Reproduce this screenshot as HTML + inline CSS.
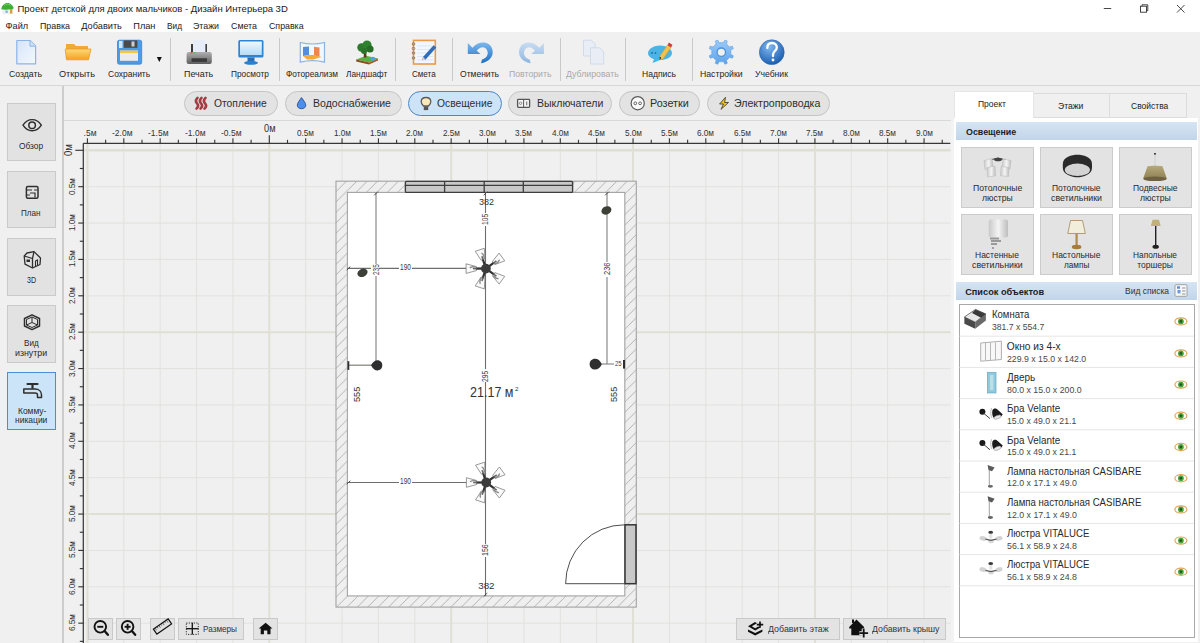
<!DOCTYPE html><html><head><meta charset="utf-8"><style>
*{margin:0;padding:0;box-sizing:border-box}
html,body{width:1200px;height:643px;overflow:hidden;background:#f0f0f0;font-family:"Liberation Sans",sans-serif}
.t{position:absolute;white-space:pre}
.b{position:absolute}
svg{position:absolute;overflow:visible}
</style></head><body>
<div class="b" style="left:0.00px;top:0.00px;width:1200.00px;height:32.00px;background:#fff"></div>
<svg style="left:0;top:0" width="16" height="16" viewBox="0 0 16 16">
<rect x="2.2" y="8.5" width="10" height="5.8" fill="#eef1f4"/>
<rect x="5.5" y="10.5" width="2.2" height="2.4" fill="#7aaee0"/>
<rect x="10" y="9" width="2.4" height="4.6" fill="#d6a03c"/>
<path d="M1.3,9.2 C1.8,5.5 4.5,3.1 7.4,3.1 C10.5,3.1 13.2,5.6 13.7,8.6 C11.5,9.8 4,10 1.3,9.2Z" fill="#3fae35"/>
<path d="M4,5.5 C5.5,4 8.5,3.8 10.5,5.2" fill="none" stroke="#6fd060" stroke-width="1"/>
</svg>
<div class="t" style="left:17.50px;top:4.10px;font-size:9.5px;line-height:10.61px;color:#1a1a1a;font-weight:normal;">Проект детской для двоих мальчиков - Дизайн Интерьера 3D</div>
<svg style="left:1100px;top:0" width="100" height="18" viewBox="1100 0 100 18"><line x1="1103.8" y1="8.5" x2="1111.2" y2="8.5" stroke="#333" stroke-width="0.9"/><rect x="1140.5" y="6.2" width="6" height="6" fill="none" stroke="#333" stroke-width="0.9"/><path d="M1142 6.2 V4.8 H1147.8 V10.7 H1146.5" fill="none" stroke="#333" stroke-width="0.9"/><path d="M1177 5 L1184.5 12.5 M1184.5 5 L1177 12.5" stroke="#333" stroke-width="0.9"/></svg>
<div class="t" style="left:5.60px;top:20.87px;font-size:9.2px;line-height:10.28px;color:#1a1a1a;font-weight:normal;">Файл</div>
<div class="t" style="left:40.00px;top:20.87px;font-size:9.2px;line-height:10.28px;color:#1a1a1a;font-weight:normal;transform:scaleX(0.9653);transform-origin:0 0;">Правка</div>
<div class="t" style="left:81.30px;top:20.87px;font-size:9.2px;line-height:10.28px;color:#1a1a1a;font-weight:normal;">Добавить</div>
<div class="t" style="left:133.30px;top:20.87px;font-size:9.2px;line-height:10.28px;color:#1a1a1a;font-weight:normal;">План</div>
<div class="t" style="left:167.00px;top:20.87px;font-size:9.2px;line-height:10.28px;color:#1a1a1a;font-weight:normal;transform:scaleX(0.9012);transform-origin:0 0;">Вид</div>
<div class="t" style="left:193.30px;top:20.87px;font-size:9.2px;line-height:10.28px;color:#1a1a1a;font-weight:normal;transform:scaleX(0.9582);transform-origin:0 0;">Этажи</div>
<div class="t" style="left:230.70px;top:20.87px;font-size:9.2px;line-height:10.28px;color:#1a1a1a;font-weight:normal;transform:scaleX(0.9627);transform-origin:0 0;">Смета</div>
<div class="t" style="left:268.70px;top:20.87px;font-size:9.2px;line-height:10.28px;color:#1a1a1a;font-weight:normal;transform:scaleX(0.9587);transform-origin:0 0;">Справка</div>
<div class="b" style="left:0.00px;top:32.00px;width:1200.00px;height:53.00px;background:#f0f0f0"></div>
<div class="b" style="left:0.00px;top:85.00px;width:1200.00px;height:1.00px;background:#d7d7d7"></div>
<div class="b" style="left:169.50px;top:38.00px;width:1.00px;height:43.00px;background:#c9c9c9"></div>
<div class="b" style="left:279.30px;top:38.00px;width:1.00px;height:43.00px;background:#c9c9c9"></div>
<div class="b" style="left:395.00px;top:38.00px;width:1.00px;height:43.00px;background:#c9c9c9"></div>
<div class="b" style="left:451.70px;top:38.00px;width:1.00px;height:43.00px;background:#c9c9c9"></div>
<div class="b" style="left:559.50px;top:38.00px;width:1.00px;height:43.00px;background:#c9c9c9"></div>
<div class="b" style="left:625.20px;top:38.00px;width:1.00px;height:43.00px;background:#c9c9c9"></div>
<div class="b" style="left:691.90px;top:38.00px;width:1.00px;height:43.00px;background:#c9c9c9"></div>
<div class="t" style="left:9.00px;top:68.79px;font-size:9.4px;line-height:10.50px;color:#262626;font-weight:normal;transform:scaleX(0.9238);transform-origin:0 0;">Создать</div>
<div class="t" style="left:58.80px;top:68.79px;font-size:9.4px;line-height:10.50px;color:#262626;font-weight:normal;transform:scaleX(0.9752);transform-origin:0 0;">Открыть</div>
<div class="t" style="left:107.70px;top:68.79px;font-size:9.4px;line-height:10.50px;color:#262626;font-weight:normal;transform:scaleX(0.9055);transform-origin:0 0;">Сохранить</div>
<div class="t" style="left:183.80px;top:68.79px;font-size:9.4px;line-height:10.50px;color:#262626;font-weight:normal;transform:scaleX(0.9482);transform-origin:0 0;">Печать</div>
<div class="t" style="left:230.70px;top:68.79px;font-size:9.4px;line-height:10.50px;color:#262626;font-weight:normal;transform:scaleX(0.8852);transform-origin:0 0;">Просмотр</div>
<div class="t" style="left:285.50px;top:68.79px;font-size:9.4px;line-height:10.50px;color:#262626;font-weight:normal;transform:scaleX(0.8863);transform-origin:0 0;">Фотореализм</div>
<div class="t" style="left:346.00px;top:68.79px;font-size:9.4px;line-height:10.50px;color:#262626;font-weight:normal;transform:scaleX(0.8848);transform-origin:0 0;">Ландшафт</div>
<div class="t" style="left:411.70px;top:68.79px;font-size:9.4px;line-height:10.50px;color:#262626;font-weight:normal;transform:scaleX(0.8589);transform-origin:0 0;">Смета</div>
<div class="t" style="left:460.40px;top:68.79px;font-size:9.4px;line-height:10.50px;color:#262626;font-weight:normal;transform:scaleX(0.9103);transform-origin:0 0;">Отменить</div>
<div class="t" style="left:509.20px;top:68.79px;font-size:9.4px;line-height:10.50px;color:#a9a9a9;font-weight:normal;transform:scaleX(0.9285);transform-origin:0 0;">Повторить</div>
<div class="t" style="left:565.70px;top:68.79px;font-size:9.4px;line-height:10.50px;color:#a9a9a9;font-weight:normal;transform:scaleX(0.9339);transform-origin:0 0;">Дублировать</div>
<div class="t" style="left:641.70px;top:68.79px;font-size:9.4px;line-height:10.50px;color:#262626;font-weight:normal;transform:scaleX(0.9108);transform-origin:0 0;">Надпись</div>
<div class="t" style="left:699.50px;top:68.79px;font-size:9.4px;line-height:10.50px;color:#262626;font-weight:normal;transform:scaleX(0.9264);transform-origin:0 0;">Настройки</div>
<div class="t" style="left:755.00px;top:68.79px;font-size:9.4px;line-height:10.50px;color:#262626;font-weight:normal;transform:scaleX(0.9185);transform-origin:0 0;">Учебник</div>
<svg style="left:0;top:32px" width="800" height="53" viewBox="0 32 800 53"><defs><linearGradient id="gdoc" x1="0" y1="0" x2="1" y2="1"><stop offset="0" stop-color="#d6e4fa"/><stop offset="1" stop-color="#f4f8fe"/></linearGradient><linearGradient id="gfold" x1="0" y1="0" x2="0" y2="1"><stop offset="0" stop-color="#ffd97a"/><stop offset="1" stop-color="#f4a21e"/></linearGradient><linearGradient id="gscr" x1="0" y1="0" x2="0" y2="1"><stop offset="0" stop-color="#eef7fd"/><stop offset="1" stop-color="#b9dcf4"/></linearGradient><linearGradient id="gprn" x1="0" y1="0" x2="0" y2="1"><stop offset="0" stop-color="#b0b0b0"/><stop offset="1" stop-color="#5e5e5e"/></linearGradient><linearGradient id="gundo" x1="0" y1="0" x2="0" y2="1"><stop offset="0" stop-color="#7ab8ee"/><stop offset="1" stop-color="#1f6fc0"/></linearGradient><linearGradient id="gredo" x1="0" y1="0" x2="0" y2="1"><stop offset="0" stop-color="#c8ddf2"/><stop offset="1" stop-color="#8fb6de"/></linearGradient><radialGradient id="ghelp" cx="0.4" cy="0.3" r="0.7"><stop offset="0" stop-color="#7db7f0"/><stop offset="1" stop-color="#1d5fb0"/></radialGradient><linearGradient id="ggear" x1="0" y1="0" x2="0" y2="1"><stop offset="0" stop-color="#9cccf8"/><stop offset="1" stop-color="#5da2ea"/></linearGradient></defs><path d="M16.8,40.5 H30 L35.6,46.2 V63.8 H16.8 Z" fill="url(#gdoc)" stroke="#8bb4ea" stroke-width="1.2" stroke-linejoin="round"/><path d="M30,40.5 V46.2 H35.6" fill="#cfe0f8" stroke="#8bb4ea" stroke-width="1"/><path d="M66,44 H74 L76,46 H88 V58.5 H66 Z" fill="#f2a93a"/><path d="M65.2,49 H91 L88.5,59.8 H66.5 Z" fill="url(#gfold)" stroke="#eb9a22" stroke-width="0.8"/><rect x="117.5" y="40.2" width="24.2" height="24" rx="1.8" fill="#4c9be6" stroke="#3a85d4" stroke-width="0.8"/><rect x="119" y="41" width="3.5" height="7" fill="#cfe6fb"/><rect x="123.8" y="40.4" width="13.6" height="7.4" fill="#4a4a4a"/><rect x="131.5" y="41.5" width="3" height="5" fill="#cfcfcf"/><rect x="120" y="50.6" width="18" height="10.2" fill="#ebebeb"/><rect x="120" y="50.6" width="18" height="2.4" fill="#f3c73e"/><path d="M156.8,57 H161.8 L159.3,62 Z" fill="#111"/><rect x="191" y="44" width="16" height="9" fill="#3c3c3c"/><rect x="193" y="40" width="12.4" height="12.5" fill="#e6edf9"/><rect x="186.6" y="52" width="25.2" height="11.9" rx="2" fill="url(#gprn)"/><rect x="190.5" y="52.3" width="2" height="1.2" fill="#e04040"/><rect x="193.5" y="52.3" width="2.2" height="1.2" fill="#40c040"/><rect x="191.5" y="58.3" width="15.5" height="3.6" fill="#3a3a3a"/><rect x="238.3" y="40" width="25.2" height="17.6" rx="1.5" fill="#2f84d2"/><rect x="240" y="41.5" width="21.8" height="13.5" fill="url(#gscr)"/><rect x="247.5" y="57.5" width="7" height="3.5" fill="#2a6fb5"/><ellipse cx="251" cy="62.8" rx="7" ry="2" fill="#2f7ecb"/><path d="M300.3,42.5 Q312.5,45.5 324.5,42.5 V62.2 Q312.5,59.2 300.3,62.2 Z" fill="#f2f7fd" stroke="#8fb3dc" stroke-width="1.2"/><path d="M303,47 L309,46.4 V55 L303,56 Z" fill="#4f8fdc"/><path d="M314,46.8 L319.5,47.5 V56.5 L314,55.5 Z" fill="#ef8650"/><path d="M303,56 L309,55 H314 L321.5,57 L313,59.5 H307 Z" fill="#f2a93a"/><path d="M356.2,59.6 L366,55.8 L378,58.6 L369,62.4 Z" fill="#58b040"/><path d="M356.2,59.6 L369,62.4 V64.5 L356.2,61.6 Z" fill="#8a4a1e"/><path d="M369,62.4 L378,58.6 V60.6 L369,64.5 Z" fill="#a55a28"/><rect x="363.8" y="50.5" width="2.6" height="7" fill="#5a3a1a"/><circle cx="361.5" cy="47.5" r="4.2" fill="#2c7a2c"/><circle cx="367" cy="45" r="4.6" fill="#2e822e"/><circle cx="370" cy="49" r="3.6" fill="#256c25"/><circle cx="364" cy="51" r="3" fill="#2a742a"/><ellipse cx="372.8" cy="58.8" rx="2.4" ry="2" fill="#45a8e0"/><rect x="413.5" y="40.4" width="21.8" height="23.6" fill="#f3f7fd" stroke="#ea9a48" stroke-width="1.6"/><line x1="417" y1="46" x2="433" y2="46" stroke="#cfdbea" stroke-width="0.6"/><line x1="417" y1="49.5" x2="433" y2="49.5" stroke="#cfdbea" stroke-width="0.6"/><line x1="417" y1="53" x2="433" y2="53" stroke="#cfdbea" stroke-width="0.6"/><line x1="417" y1="56.5" x2="433" y2="56.5" stroke="#cfdbea" stroke-width="0.6"/><line x1="417" y1="60" x2="433" y2="60" stroke="#cfdbea" stroke-width="0.6"/><circle cx="413.5" cy="44" r="1.3" fill="none" stroke="#8a6a4a" stroke-width="0.8"/><circle cx="413.5" cy="48.5" r="1.3" fill="none" stroke="#8a6a4a" stroke-width="0.8"/><circle cx="413.5" cy="53" r="1.3" fill="none" stroke="#8a6a4a" stroke-width="0.8"/><circle cx="413.5" cy="58" r="1.3" fill="none" stroke="#8a6a4a" stroke-width="0.8"/><path d="M423,57 L433.6,45.2 L436.3,47.6 L425.6,59.4 L422.3,60.2 Z" fill="#2f6dbb"/><path d="M422.3,60.2 L423,57 L425.6,59.4 Z" fill="#e8d0b0"/><path d="M472.5,47.8 C478,41 490,40 492.5,50 C494,57 488,62.5 481,63.3 L482,59.5 C486,58.5 488.5,55 487.5,51.5 C486,46 480,46 476.8,50.8 L480.5,54 H467.8 V43 Z" fill="url(#gundo)"/><path d="M539.2,47.8 C533.7,41 521.7,40 519.2,50 C517.7,57 523.7,62.5 530.7,63.3 L529.7,59.5 C525.7,58.5 523.2,55 524.2,51.5 C525.7,46 531.7,46 534.9,50.8 L531.2,54 H543.9 V43 Z" fill="url(#gredo)"/><path d="M583.5,40.2 H591.5 L595,43.8 V56 H583.5 Z" fill="#e8edf6" stroke="#cdd8e8" stroke-width="0.9"/><path d="M590.5,47.8 H599.5 L603.7,51.8 V64 H590.5 Z" fill="#e8edf6" stroke="#cdd8e8" stroke-width="0.9"/><path d="M648,53.5 C648,48.5 654,45.5 660,45.5 C666,45.5 672,48.5 672,53 C672,57.5 666,60 660,60 L652.5,63 L654,59.3 C650.5,58 648,56 648,53.5Z" fill="#4cb4e4"/><circle cx="652" cy="53" r="0.9" fill="#2a6aa8"/><circle cx="655.5" cy="53" r="0.9" fill="#2a6aa8"/><path d="M659.5,56.5 L667.5,45 L671,47.5 L663,59 L659.8,60 Z" fill="#f2c24a" stroke="#c99a2a" stroke-width="0.5"/><path d="M667.5,45 L669,42.5 L672.5,45 L671,47.5 Z" fill="#d03a3a"/><path d="M659.8,60 L659.5,56.5 L661.2,57.8 Z" fill="#222"/><path d="M730.90,52.20 L730.67,54.29 L733.38,55.79 L732.38,58.20 L729.41,57.34 L728.09,58.99 L726.44,60.31 L727.30,63.28 L724.89,64.28 L723.39,61.57 L721.30,61.80 L719.21,61.57 L717.71,64.28 L715.30,63.28 L716.16,60.31 L714.51,58.99 L713.19,57.34 L710.22,58.20 L709.22,55.79 L711.93,54.29 L711.70,52.20 L711.93,50.11 L709.22,48.61 L710.22,46.20 L713.19,47.06 L714.51,45.41 L716.16,44.09 L715.30,41.12 L717.71,40.12 L719.21,42.83 L721.30,42.60 L723.39,42.83 L724.89,40.12 L727.30,41.12 L726.44,44.09 L728.09,45.41 L729.41,47.06 L732.38,46.20 L733.38,48.61 L730.67,50.11Z" fill="url(#ggear)" stroke="#5c9fe0" stroke-width="0.6"/><circle cx="721.3" cy="52.2" r="4.2" fill="#f0f0f0" stroke="#4f92d8" stroke-width="1.3"/><circle cx="771.8" cy="52.2" r="12.4" fill="url(#ghelp)" stroke="#2a62a8" stroke-width="0.6"/><path d="M767.3,48 C767.3,44.6 769.5,43 772,43 C775,43 776.8,45 776.8,47.5 C776.8,50.5 773.5,51 773,54.5 V56" fill="none" stroke="#fff" stroke-width="2.3" stroke-linecap="round"/><circle cx="773" cy="60" r="1.4" fill="#fff"/></svg>
<div class="b" style="left:62.20px;top:86.00px;width:1.60px;height:557.00px;background:#cdcdcd"></div>
<div class="b" style="left:7.20px;top:103.20px;width:48.40px;height:58.00px;background:#e2e2e2;border:1px solid #cacaca"></div>
<div class="b" style="left:7.20px;top:170.50px;width:48.40px;height:57.70px;background:#e2e2e2;border:1px solid #cacaca"></div>
<div class="b" style="left:7.20px;top:238.00px;width:48.40px;height:57.50px;background:#e2e2e2;border:1px solid #cacaca"></div>
<div class="b" style="left:7.20px;top:305.00px;width:48.40px;height:57.50px;background:#e2e2e2;border:1px solid #cacaca"></div>
<div class="b" style="left:7.20px;top:372.00px;width:48.40px;height:57.50px;background:#cce4f7;border:1.3px solid #4a8fd6"></div>
<svg style="left:0;top:0" width="64" height="643" viewBox="0 0 64 643"><path d="M23,125.2 C26,120.5 29,119.6 32.1,119.6 C35.2,119.6 38.4,120.5 41.3,125.2 C38.4,129.9 35.2,130.8 32.1,130.8 C29,130.8 26,129.9 23,125.2Z" fill="none" stroke="#2e2e2e" stroke-width="1.4"/><circle cx="32.1" cy="125.2" r="3.3" fill="none" stroke="#2e2e2e" stroke-width="1.5"/><rect x="26.4" y="186.4" width="11.6" height="11.8" rx="1.5" fill="none" stroke="#2e2e2e" stroke-width="1.5"/><path d="M27,190 H32 M34,190 H37.4 M30,193 H35 V197.5 M27,195 H30" fill="none" stroke="#2e2e2e" stroke-width="1.2"/><path d="M24.2,256 L27,253 L34,251.6 L40.5,258 L40,264.5 L32.5,268 L25,264.2 Z" fill="none" stroke="#2e2e2e" stroke-width="1.3" stroke-linejoin="round"/><path d="M24.2,256 L32.5,258.5 L34,251.6 M32.5,258.5 V268" fill="none" stroke="#2e2e2e" stroke-width="1.3"/><rect x="26.5" y="259.5" width="3.5" height="2.5" fill="#2e2e2e"/><path d="M35.5,267 V261 L37.5,260 V266" fill="none" stroke="#2e2e2e" stroke-width="1.1"/><path d="M32,314.8 L39.5,318.5 V326 L32,329.6 L24.5,326 V318.5 Z" fill="none" stroke="#2e2e2e" stroke-width="1.5" stroke-linejoin="round"/><path d="M26.5,319.5 L32,317 L37.5,319.5 V325 L32,327.5 L26.5,325 Z" fill="none" stroke="#2e2e2e" stroke-width="1"/><path d="M26.5,325 L32,322.5 L37.5,325 M32,317 V322.5" fill="none" stroke="#2e2e2e" stroke-width="1"/><path d="M27.5,384 H37.5 M32.5,384 V388" fill="none" stroke="#2e2e2e" stroke-width="2.2" stroke-linecap="round"/><path d="M23.8,389 H35 C39,389 41.5,391.5 41.5,395 V397.5 H37.5 V395 C37.5,393.8 36.5,393 35,393 H23.8 Z" fill="none" stroke="#2e2e2e" stroke-width="1.5" stroke-linejoin="round"/></svg>
<div class="t" style="left:19.20px;top:140.67px;font-size:9.2px;line-height:10.28px;color:#2a2a2a;font-weight:normal;transform:scaleX(0.9107);transform-origin:0 0;">Обзор</div>
<div class="t" style="left:21.40px;top:207.87px;font-size:9.2px;line-height:10.28px;color:#2a2a2a;font-weight:normal;transform:scaleX(0.8792);transform-origin:0 0;">План</div>
<div class="t" style="left:26.70px;top:274.87px;font-size:9.2px;line-height:10.28px;color:#2a2a2a;font-weight:normal;transform:scaleX(0.7737);transform-origin:0 0;">3D</div>
<div class="t" style="left:23.70px;top:337.67px;font-size:9.2px;line-height:10.28px;color:#2a2a2a;font-weight:normal;transform:scaleX(0.8832);transform-origin:0 0;">Вид</div>
<div class="t" style="left:15.10px;top:347.77px;font-size:9.2px;line-height:10.28px;color:#2a2a2a;font-weight:normal;transform:scaleX(0.9610);transform-origin:0 0;">изнутри</div>
<div class="t" style="left:18.10px;top:405.67px;font-size:9.2px;line-height:10.28px;color:#2a2a2a;font-weight:normal;transform:scaleX(0.9193);transform-origin:0 0;">Комму-</div>
<div class="t" style="left:15.10px;top:415.27px;font-size:9.2px;line-height:10.28px;color:#2a2a2a;font-weight:normal;transform:scaleX(0.9228);transform-origin:0 0;">никации</div>
<div class="b" style="left:64.00px;top:120.00px;width:886.80px;height:1.00px;background:#d8d8d8"></div>
<div class="b" style="left:184.00px;top:91.00px;width:94.00px;height:25.00px;background:#e3e3e3;border:1px solid #c4c4c4;border-radius:13px"></div>
<div class="t" style="left:214.00px;top:98.28px;font-size:10.3px;line-height:11.51px;color:#2e2e2e;font-weight:normal;">Отопление</div>
<div class="b" style="left:284.60px;top:91.00px;width:117.00px;height:25.00px;background:#e3e3e3;border:1px solid #c4c4c4;border-radius:13px"></div>
<div class="t" style="left:313.40px;top:98.28px;font-size:10.3px;line-height:11.51px;color:#2e2e2e;font-weight:normal;transform:scaleX(1.0229);transform-origin:0 0;">Водоснабжение</div>
<div class="b" style="left:408.00px;top:91.00px;width:93.60px;height:25.00px;background:#cde4f8;border:1.3px solid #4c86c4;border-radius:13px"></div>
<div class="t" style="left:437.00px;top:98.28px;font-size:10.3px;line-height:11.51px;color:#2e2e2e;font-weight:normal;">Освещение</div>
<div class="b" style="left:508.00px;top:91.00px;width:104.00px;height:25.00px;background:#e3e3e3;border:1px solid #c4c4c4;border-radius:13px"></div>
<div class="t" style="left:536.60px;top:98.28px;font-size:10.3px;line-height:11.51px;color:#2e2e2e;font-weight:normal;transform:scaleX(1.0211);transform-origin:0 0;">Выключатели</div>
<div class="b" style="left:619.00px;top:91.00px;width:81.00px;height:25.00px;background:#e3e3e3;border:1px solid #c4c4c4;border-radius:13px"></div>
<div class="t" style="left:649.60px;top:98.28px;font-size:10.3px;line-height:11.51px;color:#2e2e2e;font-weight:normal;transform:scaleX(1.0486);transform-origin:0 0;">Розетки</div>
<div class="b" style="left:707.00px;top:91.00px;width:122.60px;height:25.00px;background:#e3e3e3;border:1px solid #c4c4c4;border-radius:13px"></div>
<div class="t" style="left:734.00px;top:98.28px;font-size:10.3px;line-height:11.51px;color:#2e2e2e;font-weight:normal;transform:scaleX(1.0291);transform-origin:0 0;">Электропроводка</div>
<svg style="left:180px;top:88px" width="560" height="30" viewBox="180 88 560 30"><path d="M197.5,97.8 C195.3,100 195.3,101.5 197.0,103.3 C198.7,105 198.7,106.5 196.5,108.7" fill="none" stroke="#a53a42" stroke-width="2.6" stroke-linecap="round"/><path d="M201.5,97.8 C199.3,100 199.3,101.5 201.0,103.3 C202.7,105 202.7,106.5 200.5,108.7" fill="none" stroke="#a53a42" stroke-width="2.6" stroke-linecap="round"/><path d="M205.5,97.8 C203.3,100 203.3,101.5 205.0,103.3 C206.7,105 206.7,106.5 204.5,108.7" fill="none" stroke="#a53a42" stroke-width="2.6" stroke-linecap="round"/><path d="M301.5,97.6 C303.5,100.5 305.8,103 305.8,105.2 C305.8,107.4 304,108.7 301.5,108.7 C299,108.7 297.3,107.4 297.3,105.2 C297.3,103 299.5,100.5 301.5,97.6Z" fill="#4a8ef0" stroke="#2c4f8e" stroke-width="0.9"/><path d="M423.5,106 C422,104.5 421.2,103 421.2,101.8 C421.2,99.2 423.2,97.5 426,97.5 C428.8,97.5 430.8,99.2 430.8,101.8 C430.8,103 430,104.5 428.5,106 Z" fill="#fde9b8" stroke="#5a5a5a" stroke-width="1.3"/><rect x="423.8" y="106.5" width="4.4" height="3.6" fill="#555"/><rect x="517.6" y="99.3" width="12" height="8" rx="0.8" fill="#f4f4f4" stroke="#555" stroke-width="1.3"/><line x1="523.6" y1="99.3" x2="523.6" y2="107.3" stroke="#555" stroke-width="1"/><circle cx="520.6" cy="103.3" r="1.2" fill="none" stroke="#666" stroke-width="0.7"/><rect x="526" y="101.5" width="1.3" height="3.8" fill="#888"/><circle cx="637.7" cy="103.2" r="6.6" fill="#fafafa" stroke="#5a5a5a" stroke-width="1.2"/><circle cx="635.3" cy="103.3" r="1.4" fill="none" stroke="#555" stroke-width="0.9"/><circle cx="640.1" cy="103.3" r="1.4" fill="none" stroke="#555" stroke-width="0.9"/><path d="M725.5,97.3 L719.6,104 H723.5 L721,109.3 L728.5,102.5 H724.6 Z" fill="#f2c41e" stroke="#4a4428" stroke-width="0.9" stroke-linejoin="round"/></svg>
<svg style="left:0;top:0" width="1200" height="643" viewBox="0 0 1200 643"><line x1="87.43" y1="144" x2="87.43" y2="643" stroke="#dfdfd4" stroke-width="2"/><line x1="123.80" y1="144" x2="123.80" y2="643" stroke="#e1e1de" stroke-width="1"/><line x1="160.18" y1="144" x2="160.18" y2="643" stroke="#e1e1de" stroke-width="1"/><line x1="196.55" y1="144" x2="196.55" y2="643" stroke="#e1e1de" stroke-width="1"/><line x1="232.93" y1="144" x2="232.93" y2="643" stroke="#e1e1de" stroke-width="1"/><line x1="269.30" y1="144" x2="269.30" y2="643" stroke="#dfdfd4" stroke-width="2"/><line x1="305.68" y1="144" x2="305.68" y2="643" stroke="#e1e1de" stroke-width="1"/><line x1="342.05" y1="144" x2="342.05" y2="643" stroke="#e1e1de" stroke-width="1"/><line x1="378.43" y1="144" x2="378.43" y2="643" stroke="#e1e1de" stroke-width="1"/><line x1="414.80" y1="144" x2="414.80" y2="643" stroke="#e1e1de" stroke-width="1"/><line x1="451.18" y1="144" x2="451.18" y2="643" stroke="#dfdfd4" stroke-width="2"/><line x1="487.55" y1="144" x2="487.55" y2="643" stroke="#e1e1de" stroke-width="1"/><line x1="523.92" y1="144" x2="523.92" y2="643" stroke="#e1e1de" stroke-width="1"/><line x1="560.30" y1="144" x2="560.30" y2="643" stroke="#e1e1de" stroke-width="1"/><line x1="596.67" y1="144" x2="596.67" y2="643" stroke="#e1e1de" stroke-width="1"/><line x1="633.05" y1="144" x2="633.05" y2="643" stroke="#dfdfd4" stroke-width="2"/><line x1="669.42" y1="144" x2="669.42" y2="643" stroke="#e1e1de" stroke-width="1"/><line x1="705.80" y1="144" x2="705.80" y2="643" stroke="#e1e1de" stroke-width="1"/><line x1="742.17" y1="144" x2="742.17" y2="643" stroke="#e1e1de" stroke-width="1"/><line x1="778.55" y1="144" x2="778.55" y2="643" stroke="#e1e1de" stroke-width="1"/><line x1="814.92" y1="144" x2="814.92" y2="643" stroke="#dfdfd4" stroke-width="2"/><line x1="851.30" y1="144" x2="851.30" y2="643" stroke="#e1e1de" stroke-width="1"/><line x1="887.67" y1="144" x2="887.67" y2="643" stroke="#e1e1de" stroke-width="1"/><line x1="924.05" y1="144" x2="924.05" y2="643" stroke="#e1e1de" stroke-width="1"/><line x1="84" y1="150.30" x2="950.5" y2="150.30" stroke="#dfdfd4" stroke-width="2.4"/><line x1="84" y1="186.68" x2="950.5" y2="186.68" stroke="#e1e1de" stroke-width="1"/><line x1="84" y1="223.05" x2="950.5" y2="223.05" stroke="#e1e1de" stroke-width="1"/><line x1="84" y1="259.43" x2="950.5" y2="259.43" stroke="#e1e1de" stroke-width="1"/><line x1="84" y1="295.80" x2="950.5" y2="295.80" stroke="#e1e1de" stroke-width="1"/><line x1="84" y1="332.18" x2="950.5" y2="332.18" stroke="#dfdfd4" stroke-width="2"/><line x1="84" y1="368.55" x2="950.5" y2="368.55" stroke="#e1e1de" stroke-width="1"/><line x1="84" y1="404.93" x2="950.5" y2="404.93" stroke="#e1e1de" stroke-width="1"/><line x1="84" y1="441.30" x2="950.5" y2="441.30" stroke="#e1e1de" stroke-width="1"/><line x1="84" y1="477.68" x2="950.5" y2="477.68" stroke="#e1e1de" stroke-width="1"/><line x1="84" y1="514.05" x2="950.5" y2="514.05" stroke="#dfdfd4" stroke-width="2"/><line x1="84" y1="550.42" x2="950.5" y2="550.42" stroke="#e1e1de" stroke-width="1"/><line x1="84" y1="586.80" x2="950.5" y2="586.80" stroke="#e1e1de" stroke-width="1"/><line x1="84" y1="623.17" x2="950.5" y2="623.17" stroke="#e1e1de" stroke-width="1"/><line x1="83.3" y1="143.3" x2="950.3" y2="143.3" stroke="#383838" stroke-width="1.25"/><line x1="83.3" y1="143.3" x2="83.3" y2="643" stroke="#383838" stroke-width="1.25"/><line x1="87.43" y1="138.30" x2="87.43" y2="143.3" stroke="#383838" stroke-width="1.15"/><line x1="105.61" y1="139.80" x2="105.61" y2="143.3" stroke="#383838" stroke-width="1.15"/><line x1="123.80" y1="138.30" x2="123.80" y2="143.3" stroke="#383838" stroke-width="1.15"/><line x1="141.99" y1="139.80" x2="141.99" y2="143.3" stroke="#383838" stroke-width="1.15"/><line x1="160.18" y1="138.30" x2="160.18" y2="143.3" stroke="#383838" stroke-width="1.15"/><line x1="178.36" y1="139.80" x2="178.36" y2="143.3" stroke="#383838" stroke-width="1.15"/><line x1="196.55" y1="138.30" x2="196.55" y2="143.3" stroke="#383838" stroke-width="1.15"/><line x1="214.74" y1="139.80" x2="214.74" y2="143.3" stroke="#383838" stroke-width="1.15"/><line x1="232.93" y1="138.30" x2="232.93" y2="143.3" stroke="#383838" stroke-width="1.15"/><line x1="251.11" y1="139.80" x2="251.11" y2="143.3" stroke="#383838" stroke-width="1.15"/><line x1="269.30" y1="135.30" x2="269.30" y2="143.3" stroke="#383838" stroke-width="1.15"/><line x1="287.49" y1="139.80" x2="287.49" y2="143.3" stroke="#383838" stroke-width="1.15"/><line x1="305.68" y1="138.30" x2="305.68" y2="143.3" stroke="#383838" stroke-width="1.15"/><line x1="323.86" y1="139.80" x2="323.86" y2="143.3" stroke="#383838" stroke-width="1.15"/><line x1="342.05" y1="138.30" x2="342.05" y2="143.3" stroke="#383838" stroke-width="1.15"/><line x1="360.24" y1="139.80" x2="360.24" y2="143.3" stroke="#383838" stroke-width="1.15"/><line x1="378.43" y1="138.30" x2="378.43" y2="143.3" stroke="#383838" stroke-width="1.15"/><line x1="396.61" y1="139.80" x2="396.61" y2="143.3" stroke="#383838" stroke-width="1.15"/><line x1="414.80" y1="138.30" x2="414.80" y2="143.3" stroke="#383838" stroke-width="1.15"/><line x1="432.99" y1="139.80" x2="432.99" y2="143.3" stroke="#383838" stroke-width="1.15"/><line x1="451.18" y1="138.30" x2="451.18" y2="143.3" stroke="#383838" stroke-width="1.15"/><line x1="469.36" y1="139.80" x2="469.36" y2="143.3" stroke="#383838" stroke-width="1.15"/><line x1="487.55" y1="138.30" x2="487.55" y2="143.3" stroke="#383838" stroke-width="1.15"/><line x1="505.74" y1="139.80" x2="505.74" y2="143.3" stroke="#383838" stroke-width="1.15"/><line x1="523.92" y1="138.30" x2="523.92" y2="143.3" stroke="#383838" stroke-width="1.15"/><line x1="542.11" y1="139.80" x2="542.11" y2="143.3" stroke="#383838" stroke-width="1.15"/><line x1="560.30" y1="138.30" x2="560.30" y2="143.3" stroke="#383838" stroke-width="1.15"/><line x1="578.49" y1="139.80" x2="578.49" y2="143.3" stroke="#383838" stroke-width="1.15"/><line x1="596.67" y1="138.30" x2="596.67" y2="143.3" stroke="#383838" stroke-width="1.15"/><line x1="614.86" y1="139.80" x2="614.86" y2="143.3" stroke="#383838" stroke-width="1.15"/><line x1="633.05" y1="138.30" x2="633.05" y2="143.3" stroke="#383838" stroke-width="1.15"/><line x1="651.24" y1="139.80" x2="651.24" y2="143.3" stroke="#383838" stroke-width="1.15"/><line x1="669.42" y1="138.30" x2="669.42" y2="143.3" stroke="#383838" stroke-width="1.15"/><line x1="687.61" y1="139.80" x2="687.61" y2="143.3" stroke="#383838" stroke-width="1.15"/><line x1="705.80" y1="138.30" x2="705.80" y2="143.3" stroke="#383838" stroke-width="1.15"/><line x1="723.99" y1="139.80" x2="723.99" y2="143.3" stroke="#383838" stroke-width="1.15"/><line x1="742.17" y1="138.30" x2="742.17" y2="143.3" stroke="#383838" stroke-width="1.15"/><line x1="760.36" y1="139.80" x2="760.36" y2="143.3" stroke="#383838" stroke-width="1.15"/><line x1="778.55" y1="138.30" x2="778.55" y2="143.3" stroke="#383838" stroke-width="1.15"/><line x1="796.74" y1="139.80" x2="796.74" y2="143.3" stroke="#383838" stroke-width="1.15"/><line x1="814.92" y1="138.30" x2="814.92" y2="143.3" stroke="#383838" stroke-width="1.15"/><line x1="833.11" y1="139.80" x2="833.11" y2="143.3" stroke="#383838" stroke-width="1.15"/><line x1="851.30" y1="138.30" x2="851.30" y2="143.3" stroke="#383838" stroke-width="1.15"/><line x1="869.49" y1="139.80" x2="869.49" y2="143.3" stroke="#383838" stroke-width="1.15"/><line x1="887.67" y1="138.30" x2="887.67" y2="143.3" stroke="#383838" stroke-width="1.15"/><line x1="905.86" y1="139.80" x2="905.86" y2="143.3" stroke="#383838" stroke-width="1.15"/><line x1="924.05" y1="138.30" x2="924.05" y2="143.3" stroke="#383838" stroke-width="1.15"/><line x1="942.24" y1="139.80" x2="942.24" y2="143.3" stroke="#383838" stroke-width="1.15"/><line x1="75.30" y1="150.30" x2="83.3" y2="150.30" stroke="#383838" stroke-width="1.15"/><line x1="79.80" y1="168.49" x2="83.3" y2="168.49" stroke="#383838" stroke-width="1.15"/><line x1="78.30" y1="186.68" x2="83.3" y2="186.68" stroke="#383838" stroke-width="1.15"/><line x1="79.80" y1="204.86" x2="83.3" y2="204.86" stroke="#383838" stroke-width="1.15"/><line x1="78.30" y1="223.05" x2="83.3" y2="223.05" stroke="#383838" stroke-width="1.15"/><line x1="79.80" y1="241.24" x2="83.3" y2="241.24" stroke="#383838" stroke-width="1.15"/><line x1="78.30" y1="259.43" x2="83.3" y2="259.43" stroke="#383838" stroke-width="1.15"/><line x1="79.80" y1="277.61" x2="83.3" y2="277.61" stroke="#383838" stroke-width="1.15"/><line x1="78.30" y1="295.80" x2="83.3" y2="295.80" stroke="#383838" stroke-width="1.15"/><line x1="79.80" y1="313.99" x2="83.3" y2="313.99" stroke="#383838" stroke-width="1.15"/><line x1="78.30" y1="332.18" x2="83.3" y2="332.18" stroke="#383838" stroke-width="1.15"/><line x1="79.80" y1="350.36" x2="83.3" y2="350.36" stroke="#383838" stroke-width="1.15"/><line x1="78.30" y1="368.55" x2="83.3" y2="368.55" stroke="#383838" stroke-width="1.15"/><line x1="79.80" y1="386.74" x2="83.3" y2="386.74" stroke="#383838" stroke-width="1.15"/><line x1="78.30" y1="404.93" x2="83.3" y2="404.93" stroke="#383838" stroke-width="1.15"/><line x1="79.80" y1="423.11" x2="83.3" y2="423.11" stroke="#383838" stroke-width="1.15"/><line x1="78.30" y1="441.30" x2="83.3" y2="441.30" stroke="#383838" stroke-width="1.15"/><line x1="79.80" y1="459.49" x2="83.3" y2="459.49" stroke="#383838" stroke-width="1.15"/><line x1="78.30" y1="477.68" x2="83.3" y2="477.68" stroke="#383838" stroke-width="1.15"/><line x1="79.80" y1="495.86" x2="83.3" y2="495.86" stroke="#383838" stroke-width="1.15"/><line x1="78.30" y1="514.05" x2="83.3" y2="514.05" stroke="#383838" stroke-width="1.15"/><line x1="79.80" y1="532.24" x2="83.3" y2="532.24" stroke="#383838" stroke-width="1.15"/><line x1="78.30" y1="550.42" x2="83.3" y2="550.42" stroke="#383838" stroke-width="1.15"/><line x1="79.80" y1="568.61" x2="83.3" y2="568.61" stroke="#383838" stroke-width="1.15"/><line x1="78.30" y1="586.80" x2="83.3" y2="586.80" stroke="#383838" stroke-width="1.15"/><line x1="79.80" y1="604.99" x2="83.3" y2="604.99" stroke="#383838" stroke-width="1.15"/><line x1="78.30" y1="623.17" x2="83.3" y2="623.17" stroke="#383838" stroke-width="1.15"/><line x1="79.80" y1="641.36" x2="83.3" y2="641.36" stroke="#383838" stroke-width="1.15"/></svg>
<div class="b" style="left:84px;top:120px;width:20px;height:20px;overflow:hidden"><div class="b" style="left:-84px;top:-120px;width:200px;height:200px"><div class="t" style="left:75.68px;top:128.52px;font-size:8.6px;line-height:9.61px;color:#333;font-weight:normal;transform:scaleX(0.9888);transform-origin:0 0;">-2.5м</div></div></div>
<div class="t" style="left:112.05px;top:128.52px;font-size:8.6px;line-height:9.61px;color:#333;font-weight:normal;transform:scaleX(0.9888);transform-origin:0 0;">-2.0м</div>
<div class="t" style="left:148.43px;top:128.52px;font-size:8.6px;line-height:9.61px;color:#333;font-weight:normal;transform:scaleX(0.9888);transform-origin:0 0;">-1.5м</div>
<div class="t" style="left:184.80px;top:128.52px;font-size:8.6px;line-height:9.61px;color:#333;font-weight:normal;transform:scaleX(0.9888);transform-origin:0 0;">-1.0м</div>
<div class="t" style="left:221.18px;top:128.52px;font-size:8.6px;line-height:9.61px;color:#333;font-weight:normal;transform:scaleX(0.9888);transform-origin:0 0;">-0.5м</div>
<div class="t" style="left:263.70px;top:123.47px;font-size:10.2px;line-height:11.39px;color:#333;font-weight:normal;transform:scaleX(0.9065);transform-origin:0 0;">0м</div>
<div class="t" style="left:297.18px;top:128.52px;font-size:8.6px;line-height:9.61px;color:#333;font-weight:normal;transform:scaleX(0.9514);transform-origin:0 0;">0.5м</div>
<div class="t" style="left:333.55px;top:128.52px;font-size:8.6px;line-height:9.61px;color:#333;font-weight:normal;transform:scaleX(0.9514);transform-origin:0 0;">1.0м</div>
<div class="t" style="left:369.93px;top:128.52px;font-size:8.6px;line-height:9.61px;color:#333;font-weight:normal;transform:scaleX(0.9514);transform-origin:0 0;">1.5м</div>
<div class="t" style="left:406.30px;top:128.52px;font-size:8.6px;line-height:9.61px;color:#333;font-weight:normal;transform:scaleX(0.9514);transform-origin:0 0;">2.0м</div>
<div class="t" style="left:442.68px;top:128.52px;font-size:8.6px;line-height:9.61px;color:#333;font-weight:normal;transform:scaleX(0.9514);transform-origin:0 0;">2.5м</div>
<div class="t" style="left:479.05px;top:128.52px;font-size:8.6px;line-height:9.61px;color:#333;font-weight:normal;transform:scaleX(0.9514);transform-origin:0 0;">3.0м</div>
<div class="t" style="left:515.42px;top:128.52px;font-size:8.6px;line-height:9.61px;color:#333;font-weight:normal;transform:scaleX(0.9514);transform-origin:0 0;">3.5м</div>
<div class="t" style="left:551.80px;top:128.52px;font-size:8.6px;line-height:9.61px;color:#333;font-weight:normal;transform:scaleX(0.9514);transform-origin:0 0;">4.0м</div>
<div class="t" style="left:588.17px;top:128.52px;font-size:8.6px;line-height:9.61px;color:#333;font-weight:normal;transform:scaleX(0.9514);transform-origin:0 0;">4.5м</div>
<div class="t" style="left:624.55px;top:128.52px;font-size:8.6px;line-height:9.61px;color:#333;font-weight:normal;transform:scaleX(0.9514);transform-origin:0 0;">5.0м</div>
<div class="t" style="left:660.92px;top:128.52px;font-size:8.6px;line-height:9.61px;color:#333;font-weight:normal;transform:scaleX(0.9514);transform-origin:0 0;">5.5м</div>
<div class="t" style="left:697.30px;top:128.52px;font-size:8.6px;line-height:9.61px;color:#333;font-weight:normal;transform:scaleX(0.9514);transform-origin:0 0;">6.0м</div>
<div class="t" style="left:733.67px;top:128.52px;font-size:8.6px;line-height:9.61px;color:#333;font-weight:normal;transform:scaleX(0.9514);transform-origin:0 0;">6.5м</div>
<div class="t" style="left:770.05px;top:128.52px;font-size:8.6px;line-height:9.61px;color:#333;font-weight:normal;transform:scaleX(0.9514);transform-origin:0 0;">7.0м</div>
<div class="t" style="left:806.42px;top:128.52px;font-size:8.6px;line-height:9.61px;color:#333;font-weight:normal;transform:scaleX(0.9514);transform-origin:0 0;">7.5м</div>
<div class="t" style="left:842.80px;top:128.52px;font-size:8.6px;line-height:9.61px;color:#333;font-weight:normal;transform:scaleX(0.9514);transform-origin:0 0;">8.0м</div>
<div class="t" style="left:879.17px;top:128.52px;font-size:8.6px;line-height:9.61px;color:#333;font-weight:normal;transform:scaleX(0.9514);transform-origin:0 0;">8.5м</div>
<div class="t" style="left:915.55px;top:128.52px;font-size:8.6px;line-height:9.61px;color:#333;font-weight:normal;transform:scaleX(0.9514);transform-origin:0 0;">9.0м</div>
<div class="b" style="left:72.2px;top:150.30px;transform:rotate(-90deg);transform-origin:0 0"><div class="t" style="left:-5.80px;top:-9.23px;font-size:10.2px;line-height:11.39px;color:#333;font-weight:normal;transform:scaleX(0.9380);transform-origin:0 0;">0м</div></div>
<div class="b" style="left:75.9px;top:186.68px;transform:rotate(-90deg);transform-origin:0 0"><div class="t" style="left:-8.50px;top:-7.78px;font-size:8.6px;line-height:9.61px;color:#333;font-weight:normal;transform:scaleX(0.9514);transform-origin:0 0;">0.5м</div></div>
<div class="b" style="left:75.9px;top:223.05px;transform:rotate(-90deg);transform-origin:0 0"><div class="t" style="left:-8.50px;top:-7.78px;font-size:8.6px;line-height:9.61px;color:#333;font-weight:normal;transform:scaleX(0.9514);transform-origin:0 0;">1.0м</div></div>
<div class="b" style="left:75.9px;top:259.43px;transform:rotate(-90deg);transform-origin:0 0"><div class="t" style="left:-8.50px;top:-7.78px;font-size:8.6px;line-height:9.61px;color:#333;font-weight:normal;transform:scaleX(0.9514);transform-origin:0 0;">1.5м</div></div>
<div class="b" style="left:75.9px;top:295.80px;transform:rotate(-90deg);transform-origin:0 0"><div class="t" style="left:-8.50px;top:-7.78px;font-size:8.6px;line-height:9.61px;color:#333;font-weight:normal;transform:scaleX(0.9514);transform-origin:0 0;">2.0м</div></div>
<div class="b" style="left:75.9px;top:332.18px;transform:rotate(-90deg);transform-origin:0 0"><div class="t" style="left:-8.50px;top:-7.78px;font-size:8.6px;line-height:9.61px;color:#333;font-weight:normal;transform:scaleX(0.9514);transform-origin:0 0;">2.5м</div></div>
<div class="b" style="left:75.9px;top:368.55px;transform:rotate(-90deg);transform-origin:0 0"><div class="t" style="left:-8.50px;top:-7.78px;font-size:8.6px;line-height:9.61px;color:#333;font-weight:normal;transform:scaleX(0.9514);transform-origin:0 0;">3.0м</div></div>
<div class="b" style="left:75.9px;top:404.93px;transform:rotate(-90deg);transform-origin:0 0"><div class="t" style="left:-8.50px;top:-7.78px;font-size:8.6px;line-height:9.61px;color:#333;font-weight:normal;transform:scaleX(0.9514);transform-origin:0 0;">3.5м</div></div>
<div class="b" style="left:75.9px;top:441.30px;transform:rotate(-90deg);transform-origin:0 0"><div class="t" style="left:-8.50px;top:-7.78px;font-size:8.6px;line-height:9.61px;color:#333;font-weight:normal;transform:scaleX(0.9514);transform-origin:0 0;">4.0м</div></div>
<div class="b" style="left:75.9px;top:477.68px;transform:rotate(-90deg);transform-origin:0 0"><div class="t" style="left:-8.50px;top:-7.78px;font-size:8.6px;line-height:9.61px;color:#333;font-weight:normal;transform:scaleX(0.9514);transform-origin:0 0;">4.5м</div></div>
<div class="b" style="left:75.9px;top:514.05px;transform:rotate(-90deg);transform-origin:0 0"><div class="t" style="left:-8.50px;top:-7.78px;font-size:8.6px;line-height:9.61px;color:#333;font-weight:normal;transform:scaleX(0.9514);transform-origin:0 0;">5.0м</div></div>
<div class="b" style="left:75.9px;top:550.42px;transform:rotate(-90deg);transform-origin:0 0"><div class="t" style="left:-8.50px;top:-7.78px;font-size:8.6px;line-height:9.61px;color:#333;font-weight:normal;transform:scaleX(0.9514);transform-origin:0 0;">5.5м</div></div>
<div class="b" style="left:75.9px;top:586.80px;transform:rotate(-90deg);transform-origin:0 0"><div class="t" style="left:-8.50px;top:-7.78px;font-size:8.6px;line-height:9.61px;color:#333;font-weight:normal;transform:scaleX(0.9514);transform-origin:0 0;">6.0м</div></div>
<div class="b" style="left:75.9px;top:623.17px;transform:rotate(-90deg);transform-origin:0 0"><div class="t" style="left:-8.50px;top:-7.78px;font-size:8.6px;line-height:9.61px;color:#333;font-weight:normal;transform:scaleX(0.9514);transform-origin:0 0;">6.5м</div></div>
<svg style="left:0;top:0" width="1200" height="643" viewBox="0 0 1200 643"><defs><pattern id="hatch" patternUnits="userSpaceOnUse" width="10.4" height="10.4" x="336" y="181.2"><path d="M-2.6,2.6 L2.6,-2.6 M0,10.4 L10.4,0 M7.8,13 L13,7.8" stroke="#a4a4a4" stroke-width="0.8"/></pattern></defs><path d="M336,181.2 H636.3 V607.1 H336 Z M347.4,192.4 V595.9 H624.8 V192.4 Z" fill="#efefef" fill-rule="evenodd"/><path d="M336,181.2 H636.3 V607.1 H336 Z M347.4,192.4 V595.9 H624.8 V192.4 Z" fill="url(#hatch)" fill-rule="evenodd"/><rect x="336" y="181.2" width="300.3" height="425.9" fill="none" stroke="#a2a2a2" stroke-width="1.1"/><rect x="347.4" y="192.4" width="277.4" height="403.5" fill="#fff" stroke="#a2a2a2" stroke-width="1.1"/><rect x="405.4" y="181.4" width="167.2" height="11" rx="1" fill="#c9c9c9" stroke="#3e3e3e" stroke-width="1.4"/><line x1="405.4" y1="185.4" x2="572.6" y2="185.4" stroke="#3e3e3e" stroke-width="1.4"/><line x1="444.6" y1="181.4" x2="444.6" y2="192.4" stroke="#3e3e3e" stroke-width="1.3"/><line x1="484.2" y1="181.4" x2="484.2" y2="192.4" stroke="#3e3e3e" stroke-width="1.3"/><line x1="523.3" y1="181.4" x2="523.3" y2="192.4" stroke="#3e3e3e" stroke-width="1.3"/><path d="M624.5,524.8 A58.9,58.9 0 0 0 565.6,583.7 H624.5" fill="none" stroke="#3a3a3a" stroke-width="0.9"/><rect x="625" y="524.8" width="11" height="58.9" fill="#c8c8c8" stroke="#353535" stroke-width="1.5"/><line x1="485.5" y1="192.4" x2="485.5" y2="595.9" stroke="#6e6e6e" stroke-width="1.1"/><line x1="347.4" y1="268.4" x2="485.5" y2="268.4" stroke="#6e6e6e" stroke-width="1.1"/><line x1="347.4" y1="482.5" x2="485.5" y2="482.5" stroke="#6e6e6e" stroke-width="1.1"/><line x1="376" y1="192.4" x2="376" y2="362" stroke="#8a8a8a" stroke-width="1.2"/><line x1="607" y1="192.4" x2="607" y2="364" stroke="#8a8a8a" stroke-width="1.2"/><line x1="349" y1="365.2" x2="372" y2="365.2" stroke="#8a8a80" stroke-width="1.3"/><line x1="600" y1="364" x2="614" y2="364" stroke="#8a8a8a" stroke-width="1.2"/><line x1="374.2" y1="195.3" x2="377.8" y2="191.7" stroke="#444" stroke-width="1"/><line x1="605.2" y1="195.3" x2="608.8" y2="191.7" stroke="#444" stroke-width="1"/><line x1="483.7" y1="195.3" x2="487.3" y2="191.7" stroke="#444" stroke-width="1"/><line x1="483.7" y1="596.5999999999999" x2="487.3" y2="593.0" stroke="#444" stroke-width="1"/><line x1="346.7" y1="270.2" x2="350.3" y2="266.59999999999997" stroke="#444" stroke-width="1"/><line x1="346.7" y1="484.3" x2="350.3" y2="480.7" stroke="#444" stroke-width="1"/><rect x="347.5" y="361.2" width="1.8" height="8.7" fill="#2e2e2e"/><rect x="623" y="360" width="2.1" height="8.6" fill="#2e2e2e"/><path d="M371,365.3 C373,361.5 375,360.2 377.5,360.2 C380.5,360.2 382.3,362.5 382.3,365.3 C382.3,368.3 380.3,370.5 377.3,370.5 C375,370.5 373,369 371,365.3Z" fill="#2f2f2f"/><path d="M601.8,364.2 C600,368 598,369.6 595,369.6 C592,369.6 589.6,367.2 589.6,364.2 C589.6,361 592,358.7 595,358.7 C598,358.7 600,360.5 601.8,364.2Z" fill="#2f2f2f"/><ellipse cx="606.4" cy="210.4" rx="5.2" ry="4" transform="rotate(-25 606.4 210.4)" fill="#3c4036"/><ellipse cx="362.5" cy="272.8" rx="5.3" ry="4" transform="rotate(-25 362.5 272.8)" fill="#3c4036"/><polygon points="476.40,266.60 466.10,263.80 466.10,273.40 476.40,270.60" fill="#fafafa" stroke="#808080" stroke-width="0.8"/><line x1="485.90" y1="268.60" x2="475.90" y2="268.60" stroke="#333" stroke-width="2.2"/><line x1="476.90" y1="268.60" x2="472.90" y2="268.60" stroke="#666" stroke-width="1.6"/><path d="M475.90,267.10 Q470.90,266.10 469.90,268.10" fill="none" stroke="#888" stroke-width="1.4"/><polygon points="484.87,258.95 484.35,248.29 475.22,251.25 481.06,260.18" fill="#fafafa" stroke="#808080" stroke-width="0.8"/><line x1="485.90" y1="268.60" x2="482.81" y2="259.09" stroke="#333" stroke-width="2.2"/><line x1="483.12" y1="260.04" x2="481.88" y2="256.24" stroke="#666" stroke-width="1.6"/><path d="M484.24,258.63 Q483.64,253.56 481.43,253.23" fill="none" stroke="#888" stroke-width="1.4"/><polygon points="494.76,264.63 504.74,260.85 499.10,253.08 492.41,261.40" fill="#fafafa" stroke="#808080" stroke-width="0.8"/><line x1="485.90" y1="268.60" x2="493.99" y2="262.72" stroke="#333" stroke-width="2.2"/><line x1="493.18" y1="263.31" x2="496.42" y2="260.96" stroke="#666" stroke-width="1.6"/><path d="M494.87,263.94 Q499.50,261.81 499.14,259.60" fill="none" stroke="#888" stroke-width="1.4"/><polygon points="492.41,275.80 499.10,284.12 504.74,276.35 494.76,272.57" fill="#fafafa" stroke="#808080" stroke-width="0.8"/><line x1="485.90" y1="268.60" x2="493.99" y2="274.48" stroke="#333" stroke-width="2.2"/><line x1="493.18" y1="273.89" x2="496.42" y2="276.24" stroke="#666" stroke-width="1.6"/><path d="M493.11,275.69 Q496.57,279.44 498.55,278.41" fill="none" stroke="#888" stroke-width="1.4"/><polygon points="481.06,277.02 475.22,285.95 484.35,288.91 484.87,278.25" fill="#fafafa" stroke="#808080" stroke-width="0.8"/><line x1="485.90" y1="268.60" x2="482.81" y2="278.11" stroke="#333" stroke-width="2.2"/><line x1="483.12" y1="277.16" x2="481.88" y2="280.96" stroke="#666" stroke-width="1.6"/><path d="M481.38,277.65 Q478.89,282.09 480.48,283.66" fill="none" stroke="#888" stroke-width="1.4"/><circle cx="485.90" cy="268.60" r="4.9" fill="#3c3c3c"/><polygon points="476.70,480.50 466.40,477.70 466.40,487.30 476.70,484.50" fill="#fafafa" stroke="#808080" stroke-width="0.8"/><line x1="486.20" y1="482.50" x2="476.20" y2="482.50" stroke="#333" stroke-width="2.2"/><line x1="477.20" y1="482.50" x2="473.20" y2="482.50" stroke="#666" stroke-width="1.6"/><path d="M476.20,481.00 Q471.20,480.00 470.20,482.00" fill="none" stroke="#888" stroke-width="1.4"/><polygon points="485.17,472.85 484.65,462.19 475.52,465.15 481.36,474.08" fill="#fafafa" stroke="#808080" stroke-width="0.8"/><line x1="486.20" y1="482.50" x2="483.11" y2="472.99" stroke="#333" stroke-width="2.2"/><line x1="483.42" y1="473.94" x2="482.18" y2="470.14" stroke="#666" stroke-width="1.6"/><path d="M484.54,472.53 Q483.94,467.46 481.73,467.13" fill="none" stroke="#888" stroke-width="1.4"/><polygon points="495.06,478.53 505.04,474.75 499.40,466.98 492.71,475.30" fill="#fafafa" stroke="#808080" stroke-width="0.8"/><line x1="486.20" y1="482.50" x2="494.29" y2="476.62" stroke="#333" stroke-width="2.2"/><line x1="493.48" y1="477.21" x2="496.72" y2="474.86" stroke="#666" stroke-width="1.6"/><path d="M495.17,477.84 Q499.80,475.71 499.44,473.50" fill="none" stroke="#888" stroke-width="1.4"/><polygon points="492.71,489.70 499.40,498.02 505.04,490.25 495.06,486.47" fill="#fafafa" stroke="#808080" stroke-width="0.8"/><line x1="486.20" y1="482.50" x2="494.29" y2="488.38" stroke="#333" stroke-width="2.2"/><line x1="493.48" y1="487.79" x2="496.72" y2="490.14" stroke="#666" stroke-width="1.6"/><path d="M493.41,489.59 Q496.87,493.34 498.85,492.31" fill="none" stroke="#888" stroke-width="1.4"/><polygon points="481.36,490.92 475.52,499.85 484.65,502.81 485.17,492.15" fill="#fafafa" stroke="#808080" stroke-width="0.8"/><line x1="486.20" y1="482.50" x2="483.11" y2="492.01" stroke="#333" stroke-width="2.2"/><line x1="483.42" y1="491.06" x2="482.18" y2="494.86" stroke="#666" stroke-width="1.6"/><path d="M481.68,491.55 Q479.19,495.99 480.78,497.56" fill="none" stroke="#888" stroke-width="1.4"/><circle cx="486.20" cy="482.50" r="4.9" fill="#3c3c3c"/></svg>
<div class="t" style="left:478.75px;top:196.53px;font-size:9.8px;line-height:10.95px;color:#333;font-weight:normal;transform:scaleX(0.9173);transform-origin:0 0;">382</div>
<div class="t" style="left:478.20px;top:580.63px;font-size:9.8px;line-height:10.95px;color:#333;font-weight:normal;">382</div>
<div class="t" style="left:469.50px;top:385.35px;font-size:14.2px;line-height:15.86px;color:#333;font-weight:normal;transform:scaleX(0.8834);transform-origin:0 0;">21.17 м</div>
<div class="t" style="left:514.50px;top:385.57px;font-size:6px;line-height:6.70px;color:#333;font-weight:normal;transform:scaleX(1.0487);transform-origin:0 0;">2</div>
<div class="b" style="left:399.00px;top:264.10px;width:13.00px;height:8.30px;background:#fff"></div>
<div class="t" style="left:399.90px;top:262.94px;font-size:8.8px;line-height:9.83px;color:#3a3a3a;font-weight:normal;transform:scaleX(0.7423);transform-origin:0 0;">190</div>
<div class="b" style="left:399.00px;top:478.40px;width:13.00px;height:8.30px;background:#fff"></div>
<div class="t" style="left:399.90px;top:477.24px;font-size:8.8px;line-height:9.83px;color:#3a3a3a;font-weight:normal;transform:scaleX(0.7423);transform-origin:0 0;">190</div>
<div class="b" style="left:613.80px;top:359.50px;width:8.70px;height:8.00px;background:#fff"></div>
<div class="t" style="left:614.80px;top:359.71px;font-size:7.5px;line-height:8.38px;color:#444;font-weight:normal;transform:scaleX(0.7911);transform-origin:0 0;">25</div>
<div class="b" style="left:480.67px;top:212.60px;width:7.93px;height:13.20px;background:#fff"></div><div class="b" style="left:488.00px;top:219.20px;transform:rotate(-90deg);transform-origin:0 0"><div class="t" style="left:-5.60px;top:-8.51px;font-size:9.4px;line-height:10.50px;color:#3a3a3a;font-weight:normal;transform:scaleX(0.7141);transform-origin:0 0;">105</div></div>
<div class="b" style="left:480.67px;top:369.00px;width:7.93px;height:13.20px;background:#fff"></div><div class="b" style="left:488.00px;top:375.60px;transform:rotate(-90deg);transform-origin:0 0"><div class="t" style="left:-5.60px;top:-8.51px;font-size:9.4px;line-height:10.50px;color:#3a3a3a;font-weight:normal;transform:scaleX(0.7141);transform-origin:0 0;">295</div></div>
<div class="b" style="left:480.87px;top:543.50px;width:7.93px;height:13.70px;background:#fff"></div><div class="b" style="left:488.20px;top:550.35px;transform:rotate(-90deg);transform-origin:0 0"><div class="t" style="left:-5.85px;top:-8.51px;font-size:9.4px;line-height:10.50px;color:#3a3a3a;font-weight:normal;transform:scaleX(0.7459);transform-origin:0 0;">156</div></div>
<div class="b" style="left:371.17px;top:263.60px;width:7.93px;height:12.90px;background:#fff"></div><div class="b" style="left:378.50px;top:270.05px;transform:rotate(-90deg);transform-origin:0 0"><div class="t" style="left:-5.45px;top:-8.51px;font-size:9.4px;line-height:10.50px;color:#3a3a3a;font-weight:normal;transform:scaleX(0.6949);transform-origin:0 0;">235</div></div>
<div class="b" style="left:602.27px;top:262.00px;width:7.93px;height:14.50px;background:#fff"></div><div class="b" style="left:609.60px;top:269.25px;transform:rotate(-90deg);transform-origin:0 0"><div class="t" style="left:-6.25px;top:-8.51px;font-size:9.4px;line-height:10.50px;color:#3a3a3a;font-weight:normal;transform:scaleX(0.7970);transform-origin:0 0;">236</div></div>
<div class="b" style="left:361.20px;top:393.60px;transform:rotate(-90deg);transform-origin:0 0"><div class="t" style="left:-7.60px;top:-8.87px;font-size:9.8px;line-height:10.95px;color:#333;font-weight:normal;transform:scaleX(0.9295);transform-origin:0 0;">555</div></div>
<div class="b" style="left:618.00px;top:393.60px;transform:rotate(-90deg);transform-origin:0 0"><div class="t" style="left:-7.60px;top:-8.87px;font-size:9.8px;line-height:10.95px;color:#333;font-weight:normal;transform:scaleX(0.9295);transform-origin:0 0;">555</div></div>
<div class="b" style="left:88.40px;top:617.80px;width:24.50px;height:22.10px;background:#e3e3e3;border:1px solid #c9c9c9"></div>
<div class="b" style="left:115.90px;top:617.80px;width:24.80px;height:22.10px;background:#e3e3e3;border:1px solid #c9c9c9"></div>
<div class="b" style="left:150.00px;top:617.80px;width:24.90px;height:22.10px;background:#e3e3e3;border:1px solid #c9c9c9"></div>
<div class="b" style="left:177.70px;top:617.80px;width:66.20px;height:22.10px;background:#e3e3e3;border:1px solid #c9c9c9"></div>
<div class="b" style="left:253.00px;top:617.80px;width:24.80px;height:22.10px;background:#e3e3e3;border:1px solid #c9c9c9"></div>
<div class="t" style="left:202.60px;top:623.88px;font-size:9.3px;line-height:10.39px;color:#333;font-weight:normal;transform:scaleX(0.8797);transform-origin:0 0;">Размеры</div>
<div class="b" style="left:735.80px;top:617.70px;width:103.80px;height:22.40px;background:#e3e3e3;border:1px solid #c9c9c9"></div>
<div class="t" style="left:768.30px;top:624.28px;font-size:9.3px;line-height:10.39px;color:#333;font-weight:normal;transform:scaleX(0.9518);transform-origin:0 0;">Добавить этаж</div>
<div class="b" style="left:842.70px;top:617.70px;width:102.90px;height:22.40px;background:#e3e3e3;border:1px solid #c9c9c9"></div>
<div class="t" style="left:871.50px;top:624.28px;font-size:9.3px;line-height:10.39px;color:#333;font-weight:normal;transform:scaleX(0.9411);transform-origin:0 0;">Добавить крышу</div>
<svg style="left:80px;top:610px" width="800" height="33" viewBox="80 610 800 33"><circle cx="100.3" cy="626.8" r="5.8" fill="none" stroke="#111" stroke-width="1.9"/><line x1="104.6" y1="631" x2="107.89999999999999" y2="634.8" stroke="#111" stroke-width="2.3" stroke-linecap="round"/><line x1="97.3" y1="626.8" x2="103.3" y2="626.8" stroke="#111" stroke-width="1.9"/><circle cx="127.6" cy="626.8" r="5.8" fill="none" stroke="#111" stroke-width="1.9"/><line x1="131.9" y1="631" x2="135.2" y2="634.8" stroke="#111" stroke-width="2.3" stroke-linecap="round"/><line x1="124.6" y1="626.8" x2="130.6" y2="626.8" stroke="#111" stroke-width="1.9"/><line x1="127.6" y1="623.8" x2="127.6" y2="629.8" stroke="#111" stroke-width="1.9"/><g transform="rotate(-35 162.5 626.5)"><rect x="153.5" y="623.5" width="18" height="6" fill="none" stroke="#111" stroke-width="1.2"/><line x1="155.5" y1="623.5" x2="155.5" y2="626.3" stroke="#222" stroke-width="0.6"/><line x1="157.8" y1="623.5" x2="157.8" y2="625.5" stroke="#222" stroke-width="0.6"/><line x1="160.1" y1="623.5" x2="160.1" y2="626.3" stroke="#222" stroke-width="0.6"/><line x1="162.4" y1="623.5" x2="162.4" y2="625.5" stroke="#222" stroke-width="0.6"/><line x1="164.7" y1="623.5" x2="164.7" y2="626.3" stroke="#222" stroke-width="0.6"/><line x1="167.0" y1="623.5" x2="167.0" y2="625.5" stroke="#222" stroke-width="0.6"/><line x1="169.3" y1="623.5" x2="169.3" y2="626.3" stroke="#222" stroke-width="0.6"/></g><rect x="186.3" y="623" width="12" height="11.4" fill="none" stroke="#333" stroke-width="1" stroke-dasharray="1.2,1.3"/><line x1="192.3" y1="622.7" x2="192.3" y2="634.6" stroke="#111" stroke-width="1.3"/><line x1="186" y1="628.7" x2="198.5" y2="628.7" stroke="#111" stroke-width="1.3"/><path d="M265.6,622.7 L272.5,628.6 H270.5 V634.2 H267.3 V630.6 H263.9 V634.2 H260.7 V628.6 H258.7 Z" fill="#111"/><path d="M748,629.5 L755.2,633 L762.4,629.5 V631.7 L755.2,635.5 L748,631.7 Z" fill="#111"/><path d="M748,626.3 L755,622 L757,623.2 L751.8,626.3 L755.2,628.3 L758.2,626.6 L760.5,627.5 L755.2,630.6 Z" fill="#111"/><path d="M760,621.5 V627.8 M756.8,624.6 H763.2" stroke="#111" stroke-width="1.7"/><path d="M849,628.4 L856.5,620.5 L864.5,628.4 H862.3 V635.2 H851.3 V628.4 Z" fill="#111"/><path d="M849.5,627.8 L856.5,620.6 L863.8,627.8" fill="none" stroke="#111" stroke-width="1.5"/><rect x="852" y="619.5" width="2" height="3.5" fill="#111"/><path d="M863.7,628.8 V637.6 M859.3,633.2 H868.1" stroke="#e3e3e3" stroke-width="4"/><path d="M863.7,628.8 V637.6 M859.3,633.2 H868.1" stroke="#111" stroke-width="1.8"/></svg>
<div class="b" style="left:950.80px;top:86.00px;width:249.20px;height:557.00px;background:#f0f0f0"></div>
<div class="b" style="left:950.80px;top:121.00px;width:2.80px;height:522.00px;background:#f3f3f3"></div>
<div class="b" style="left:954.00px;top:117.50px;width:244.00px;height:524.00px;background:#fff"></div>
<div class="b" style="left:1033.20px;top:92.60px;width:76.80px;height:25.40px;background:#f0f0f0;border:1px solid #dcdcdc;border-left:none"></div>
<div class="b" style="left:1110.00px;top:92.60px;width:77.00px;height:25.40px;background:#f0f0f0;border:1px solid #dcdcdc;border-left:none"></div>
<div class="b" style="left:953.60px;top:90.60px;width:80.00px;height:27.90px;background:#fff;border:1px solid #e6e6e6;border-bottom:none"></div>
<div class="t" style="left:978.00px;top:100.02px;font-size:8.6px;line-height:9.61px;color:#222;font-weight:normal;transform:scaleX(0.9884);transform-origin:0 0;">Проект</div>
<div class="t" style="left:1058.00px;top:102.02px;font-size:8.6px;line-height:9.61px;color:#222;font-weight:normal;">Этажи</div>
<div class="t" style="left:1130.70px;top:102.02px;font-size:8.6px;line-height:9.61px;color:#222;font-weight:normal;transform:scaleX(0.9877);transform-origin:0 0;">Свойства</div>
<div class="b" style="left:956.30px;top:121.80px;width:240.50px;height:18.50px;background:linear-gradient(#d6e4f3,#c1d5ea)"></div>
<div class="t" style="left:965.60px;top:126.66px;font-size:9px;line-height:10.05px;color:#1c1c28;font-weight:bold;transform:scaleX(0.9843);transform-origin:0 0;">Освещение</div>
<div class="b" style="left:961.30px;top:147.30px;width:72.60px;height:60.40px;background:#e3e3e3;border:1px solid #cbcbcb"></div>
<div class="t" style="left:972.70px;top:184.41px;font-size:8.5px;line-height:9.49px;color:#2a2a2a;font-weight:normal;transform:scaleX(1.0156);transform-origin:0 0;">Потолочные</div>
<div class="t" style="left:982.00px;top:193.91px;font-size:8.5px;line-height:9.49px;color:#2a2a2a;font-weight:normal;transform:scaleX(1.0127);transform-origin:0 0;">люстры</div>
<div class="b" style="left:1040.00px;top:147.30px;width:72.60px;height:60.40px;background:#e3e3e3;border:1px solid #cbcbcb"></div>
<div class="t" style="left:1052.00px;top:184.41px;font-size:8.5px;line-height:9.49px;color:#2a2a2a;font-weight:normal;">Потолочные</div>
<div class="t" style="left:1051.00px;top:193.91px;font-size:8.5px;line-height:9.49px;color:#2a2a2a;font-weight:normal;transform:scaleX(1.0397);transform-origin:0 0;">светильники</div>
<div class="b" style="left:1119.30px;top:147.30px;width:72.60px;height:60.40px;background:#e3e3e3;border:1px solid #cbcbcb"></div>
<div class="t" style="left:1133.00px;top:183.81px;font-size:8.5px;line-height:9.49px;color:#2a2a2a;font-weight:normal;">Подвесные</div>
<div class="t" style="left:1139.60px;top:193.71px;font-size:8.5px;line-height:9.49px;color:#2a2a2a;font-weight:normal;transform:scaleX(1.0160);transform-origin:0 0;">люстры</div>
<div class="b" style="left:961.30px;top:214.30px;width:72.60px;height:60.40px;background:#e3e3e3;border:1px solid #cbcbcb"></div>
<div class="t" style="left:975.00px;top:251.11px;font-size:8.5px;line-height:9.49px;color:#2a2a2a;font-weight:normal;">Настенные</div>
<div class="t" style="left:972.00px;top:261.21px;font-size:8.5px;line-height:9.49px;color:#2a2a2a;font-weight:normal;transform:scaleX(1.0335);transform-origin:0 0;">светильники</div>
<div class="b" style="left:1040.00px;top:214.30px;width:72.60px;height:60.40px;background:#e3e3e3;border:1px solid #cbcbcb"></div>
<div class="t" style="left:1052.00px;top:251.11px;font-size:8.5px;line-height:9.49px;color:#2a2a2a;font-weight:normal;">Настольные</div>
<div class="t" style="left:1064.00px;top:261.21px;font-size:8.5px;line-height:9.49px;color:#2a2a2a;font-weight:normal;transform:scaleX(0.9640);transform-origin:0 0;">лампы</div>
<div class="b" style="left:1119.30px;top:214.30px;width:72.60px;height:60.40px;background:#e3e3e3;border:1px solid #cbcbcb"></div>
<div class="t" style="left:1133.00px;top:251.01px;font-size:8.5px;line-height:9.49px;color:#2a2a2a;font-weight:normal;transform:scaleX(0.9793);transform-origin:0 0;">Напольные</div>
<div class="t" style="left:1137.30px;top:261.21px;font-size:8.5px;line-height:9.49px;color:#2a2a2a;font-weight:normal;">торшеры</div>
<svg style="left:950px;top:140px" width="250" height="140" viewBox="950 140 250 140"><defs><linearGradient id="gsh" x1="0" y1="0" x2="1" y2="0"><stop offset="0" stop-color="#c9c9c9"/><stop offset="0.5" stop-color="#f4f4f4"/><stop offset="1" stop-color="#bdbdbd"/></linearGradient><linearGradient id="gtan" x1="0" y1="0" x2="0" y2="1"><stop offset="0" stop-color="#b7a97a"/><stop offset="1" stop-color="#8a7a50"/></linearGradient></defs><path d="M990,160 L998,158 L1006,160" stroke="#555" stroke-width="1.2" fill="none"/><ellipse cx="998" cy="159.5" rx="4" ry="1.8" fill="#444"/><path d="M984,160.5 L992,158.5 L993,167 L985,169.5 Z" fill="url(#gsh)" stroke="#b8b8b8" stroke-width="0.5"/><path d="M1003,159 L1011,160.5 L1010,169 L1002,167.5 Z" fill="url(#gsh)" stroke="#b8b8b8" stroke-width="0.5"/><path d="M987,167.5 L995,166 L995.5,176 L987.5,176.8 Z" fill="url(#gsh)" stroke="#b8b8b8" stroke-width="0.5"/><path d="M1001,166.5 L1009,167.5 L1008.5,176.5 L1000.5,175.8 Z" fill="url(#gsh)" stroke="#b8b8b8" stroke-width="0.5"/><path d="M1062.8,164 C1062.8,157 1072,154.8 1077.4,154.8 C1083,154.8 1092,157 1092,164 V168 C1092,174.5 1083,177.3 1077.4,177.3 C1072,177.3 1062.8,174.5 1062.8,168 Z" fill="#2a2a2a"/><ellipse cx="1077.4" cy="169.8" rx="12.6" ry="6.2" fill="#d3d3d3"/><line x1="1155" y1="154" x2="1155" y2="166.5" stroke="#bbb" stroke-width="0.5"/><rect x="1154" y="153" width="2" height="1.6" fill="#444"/><path d="M1147.5,166.3 C1150,165.5 1160,165.5 1162.5,166.3 L1166.8,178.5 C1163,181.5 1147,181.5 1143.2,178.5 Z" fill="url(#gtan)"/><ellipse cx="1155" cy="178.8" rx="11.8" ry="2.3" fill="#6e6040"/><rect x="988.7" y="219.5" width="19.3" height="18" rx="2" fill="url(#gsh)"/><path d="M990,238.5 H999 M991,241 H1001 M991,244 H997 M993,247 V249" stroke="#9a9a9a" stroke-width="1.8"/><path d="M1070.5,220.5 H1082.5 L1085.3,233.5 H1067.8 Z" fill="#f2eedc" stroke="#9a7a50" stroke-width="0.7"/><rect x="1075.5" y="233.5" width="2.2" height="12" fill="#b08a50"/><ellipse cx="1076.6" cy="247" rx="4.8" ry="2.2" fill="#a67c3a"/><path d="M1152.5,219.8 H1159 L1160.7,226 H1150.9 Z" fill="#c2b07a"/><rect x="1155" y="226" width="1.4" height="19" fill="#222"/><ellipse cx="1155.7" cy="246.8" rx="3.2" ry="2" fill="#222"/></svg>
<div class="b" style="left:956.30px;top:282.00px;width:240.50px;height:18.00px;background:linear-gradient(#d6e4f3,#c1d5ea)"></div>
<div class="t" style="left:965.20px;top:286.67px;font-size:9.2px;line-height:10.28px;color:#1c1c28;font-weight:bold;">Список объектов</div>
<div class="t" style="left:1124.80px;top:286.29px;font-size:9.4px;line-height:10.50px;color:#333;font-weight:normal;transform:scaleX(0.9038);transform-origin:0 0;">Вид списка</div>
<svg style="left:1170px;top:280px" width="25" height="22" viewBox="1170 280 25 22"><rect x="1175" y="284.7" width="12" height="11.6" rx="1" fill="#f6f8fa" stroke="#9a9a9a" stroke-width="0.9"/><rect x="1177" y="286.3" width="3" height="2.4" fill="#5b8fd0"/><rect x="1177.5" y="290" width="3" height="3.4" fill="#6a9ad8"/><path d="M1182,288 H1185.5 M1182,291 H1185.5 M1182,294 H1185.5" stroke="#777" stroke-width="0.8"/></svg>
<div class="b" style="left:958.50px;top:304.20px;width:236.50px;height:334.00px;background:#fff;border:1px solid #a8a8a8"></div>
<div class="t" style="left:991.60px;top:308.97px;font-size:10.2px;line-height:11.39px;color:#2a2a2a;font-weight:normal;transform:scaleX(0.9364);transform-origin:0 0;">Комната</div>
<div class="t" style="left:991.60px;top:321.68px;font-size:9.3px;line-height:10.39px;color:#484848;font-weight:normal;transform:scaleX(0.9261);transform-origin:0 0;">381.7 x 554.7</div>
<div class="t" style="left:1006.80px;top:340.97px;font-size:10.2px;line-height:11.39px;color:#2a2a2a;font-weight:normal;">Окно из 4-х</div>
<div class="t" style="left:1006.80px;top:353.68px;font-size:9.3px;line-height:10.39px;color:#484848;font-weight:normal;transform:scaleX(0.9397);transform-origin:0 0;">229.9 x 15.0 x 142.0</div>
<div class="t" style="left:1006.80px;top:372.17px;font-size:10.2px;line-height:11.39px;color:#2a2a2a;font-weight:normal;transform:scaleX(0.9767);transform-origin:0 0;">Дверь</div>
<div class="t" style="left:1006.80px;top:384.88px;font-size:9.3px;line-height:10.39px;color:#484848;font-weight:normal;transform:scaleX(0.9430);transform-origin:0 0;">80.0 x 15.0 x 200.0</div>
<div class="t" style="left:1007.10px;top:403.37px;font-size:10.2px;line-height:11.39px;color:#2a2a2a;font-weight:normal;transform:scaleX(0.9690);transform-origin:0 0;">Бра Velante</div>
<div class="t" style="left:1007.10px;top:416.08px;font-size:9.3px;line-height:10.39px;color:#484848;font-weight:normal;transform:scaleX(0.9373);transform-origin:0 0;">15.0 x 49.0 x 21.1</div>
<div class="t" style="left:1007.10px;top:434.57px;font-size:10.2px;line-height:11.39px;color:#2a2a2a;font-weight:normal;transform:scaleX(0.9690);transform-origin:0 0;">Бра Velante</div>
<div class="t" style="left:1007.10px;top:447.28px;font-size:9.3px;line-height:10.39px;color:#484848;font-weight:normal;transform:scaleX(0.9373);transform-origin:0 0;">15.0 x 49.0 x 21.1</div>
<div class="t" style="left:1006.70px;top:465.77px;font-size:10.2px;line-height:11.39px;color:#2a2a2a;font-weight:normal;transform:scaleX(0.9450);transform-origin:0 0;">Лампа настольная CASIBARE</div>
<div class="t" style="left:1006.70px;top:478.48px;font-size:9.3px;line-height:10.39px;color:#484848;font-weight:normal;transform:scaleX(0.9454);transform-origin:0 0;">12.0 x 17.1 x 49.0</div>
<div class="t" style="left:1006.70px;top:496.97px;font-size:10.2px;line-height:11.39px;color:#2a2a2a;font-weight:normal;transform:scaleX(0.9450);transform-origin:0 0;">Лампа настольная CASIBARE</div>
<div class="t" style="left:1006.70px;top:509.68px;font-size:9.3px;line-height:10.39px;color:#484848;font-weight:normal;transform:scaleX(0.9454);transform-origin:0 0;">12.0 x 17.1 x 49.0</div>
<div class="t" style="left:1006.70px;top:528.17px;font-size:10.2px;line-height:11.39px;color:#2a2a2a;font-weight:normal;transform:scaleX(0.9438);transform-origin:0 0;">Люстра VITALUCE</div>
<div class="t" style="left:1006.70px;top:540.88px;font-size:9.3px;line-height:10.39px;color:#484848;font-weight:normal;transform:scaleX(0.9454);transform-origin:0 0;">56.1 x 58.9 x 24.8</div>
<div class="t" style="left:1006.70px;top:559.37px;font-size:10.2px;line-height:11.39px;color:#2a2a2a;font-weight:normal;transform:scaleX(0.9438);transform-origin:0 0;">Люстра VITALUCE</div>
<div class="t" style="left:1006.70px;top:572.08px;font-size:9.3px;line-height:10.39px;color:#484848;font-weight:normal;transform:scaleX(0.9454);transform-origin:0 0;">56.1 x 58.9 x 24.8</div>
<svg style="left:950px;top:300px" width="250" height="343" viewBox="950 300 250 343"><ellipse cx="1180.9" cy="321.40" rx="6" ry="3.6" fill="#fff" stroke="#e2a55a" stroke-width="1.2"/><circle cx="1180.9" cy="321.40" r="2.9" fill="#4aa63a"/><circle cx="1180.9" cy="321.40" r="1.3" fill="#1f5a1a"/><line x1="959.5" y1="336.20" x2="1194" y2="336.20" stroke="#e6e6e6" stroke-width="1"/><ellipse cx="1180.9" cy="353.40" rx="6" ry="3.6" fill="#fff" stroke="#e2a55a" stroke-width="1.2"/><circle cx="1180.9" cy="353.40" r="2.9" fill="#4aa63a"/><circle cx="1180.9" cy="353.40" r="1.3" fill="#1f5a1a"/><line x1="959.5" y1="367.40" x2="1194" y2="367.40" stroke="#e6e6e6" stroke-width="1"/><ellipse cx="1180.9" cy="384.60" rx="6" ry="3.6" fill="#fff" stroke="#e2a55a" stroke-width="1.2"/><circle cx="1180.9" cy="384.60" r="2.9" fill="#4aa63a"/><circle cx="1180.9" cy="384.60" r="1.3" fill="#1f5a1a"/><line x1="959.5" y1="398.60" x2="1194" y2="398.60" stroke="#e6e6e6" stroke-width="1"/><ellipse cx="1180.9" cy="415.80" rx="6" ry="3.6" fill="#fff" stroke="#e2a55a" stroke-width="1.2"/><circle cx="1180.9" cy="415.80" r="2.9" fill="#4aa63a"/><circle cx="1180.9" cy="415.80" r="1.3" fill="#1f5a1a"/><line x1="959.5" y1="429.80" x2="1194" y2="429.80" stroke="#e6e6e6" stroke-width="1"/><ellipse cx="1180.9" cy="447.00" rx="6" ry="3.6" fill="#fff" stroke="#e2a55a" stroke-width="1.2"/><circle cx="1180.9" cy="447.00" r="2.9" fill="#4aa63a"/><circle cx="1180.9" cy="447.00" r="1.3" fill="#1f5a1a"/><line x1="959.5" y1="461.00" x2="1194" y2="461.00" stroke="#e6e6e6" stroke-width="1"/><ellipse cx="1180.9" cy="478.20" rx="6" ry="3.6" fill="#fff" stroke="#e2a55a" stroke-width="1.2"/><circle cx="1180.9" cy="478.20" r="2.9" fill="#4aa63a"/><circle cx="1180.9" cy="478.20" r="1.3" fill="#1f5a1a"/><line x1="959.5" y1="492.20" x2="1194" y2="492.20" stroke="#e6e6e6" stroke-width="1"/><ellipse cx="1180.9" cy="509.40" rx="6" ry="3.6" fill="#fff" stroke="#e2a55a" stroke-width="1.2"/><circle cx="1180.9" cy="509.40" r="2.9" fill="#4aa63a"/><circle cx="1180.9" cy="509.40" r="1.3" fill="#1f5a1a"/><line x1="959.5" y1="523.40" x2="1194" y2="523.40" stroke="#e6e6e6" stroke-width="1"/><ellipse cx="1180.9" cy="540.60" rx="6" ry="3.6" fill="#fff" stroke="#e2a55a" stroke-width="1.2"/><circle cx="1180.9" cy="540.60" r="2.9" fill="#4aa63a"/><circle cx="1180.9" cy="540.60" r="1.3" fill="#1f5a1a"/><line x1="959.5" y1="554.60" x2="1194" y2="554.60" stroke="#e6e6e6" stroke-width="1"/><ellipse cx="1180.9" cy="571.80" rx="6" ry="3.6" fill="#fff" stroke="#e2a55a" stroke-width="1.2"/><circle cx="1180.9" cy="571.80" r="2.9" fill="#4aa63a"/><circle cx="1180.9" cy="571.80" r="1.3" fill="#1f5a1a"/><line x1="959.5" y1="585.80" x2="1194" y2="585.80" stroke="#e6e6e6" stroke-width="1"/><path d="M964.4,317 L975.5,309.4 L985.9,314 L975.2,322.2 Z" fill="#e8e8e8" stroke="#555" stroke-width="0.8"/><path d="M964.4,317 L975.2,322.2 V328.7 L964.4,323.8 Z" fill="#4a4a4a"/><path d="M975.2,322.2 L985.9,314 V320.5 L975.2,328.7 Z" fill="#6a6a6a"/><path d="M975.5,309.4 L985.9,314 L981,317.8 L972,313 Z" fill="#3a3a3a"/><path d="M980.7,343 L1001.4,341.2 V359.5 L980.7,361.2 Z" fill="#f8f8f8" stroke="#b0b0b0" stroke-width="1"/><line x1="985.5" y1="342.6" x2="985.5" y2="360.5" stroke="#b8b8b8" stroke-width="1"/><line x1="990.5" y1="342.6" x2="990.5" y2="360.5" stroke="#b8b8b8" stroke-width="1"/><line x1="995.5" y1="342.6" x2="995.5" y2="360.5" stroke="#b8b8b8" stroke-width="1"/><rect x="987.4" y="372.3" width="8.6" height="20.7" fill="#8fc9dd" stroke="#6aa8c0" stroke-width="0.7"/><rect x="990" y="375" width="3.5" height="15" fill="#b8e0ec"/><circle cx="982.4" cy="411.80" r="3" fill="#1a1a1a"/><line x1="983.5" y1="413.10" x2="990" y2="418.60" stroke="#444" stroke-width="1"/><path d="M991.5,408.10 C990,412.10 991,416.10 992,418.10" fill="none" stroke="#bbb" stroke-width="1"/><path d="M992.5,410.10 C993.5,408.10 996.5,407.90 998,410.10 L1002.7,414.30 C1001.5,417.60 996,419.10 993.3,417.60 C992,415.10 992,412.10 992.5,410.10 Z" fill="#1a1a1a"/><ellipse cx="997.5" cy="417.10" rx="3.8" ry="1.7" transform="rotate(-20 997.5 417.10)" fill="#e6e6e6" stroke="#8a8a8a" stroke-width="0.5"/><circle cx="982.4" cy="443.00" r="3" fill="#1a1a1a"/><line x1="983.5" y1="444.30" x2="990" y2="449.80" stroke="#444" stroke-width="1"/><path d="M991.5,439.30 C990,443.30 991,447.30 992,449.30" fill="none" stroke="#bbb" stroke-width="1"/><path d="M992.5,441.30 C993.5,439.30 996.5,439.10 998,441.30 L1002.7,445.50 C1001.5,448.80 996,450.30 993.3,448.80 C992,446.30 992,443.30 992.5,441.30 Z" fill="#1a1a1a"/><ellipse cx="997.5" cy="448.30" rx="3.8" ry="1.7" transform="rotate(-20 997.5 448.30)" fill="#e6e6e6" stroke="#8a8a8a" stroke-width="0.5"/><path d="M987.6,465.00 L994.6,467.50 L992,471.30 L988.5,470.00 Z" fill="#5a5a5a"/><line x1="989.3" y1="470.00" x2="989.3" y2="485.00" stroke="#888" stroke-width="0.8"/><ellipse cx="990.4" cy="486.30" rx="2.6" ry="1.4" fill="#666"/><path d="M987.6,496.20 L994.6,498.70 L992,502.50 L988.5,501.20 Z" fill="#5a5a5a"/><line x1="989.3" y1="501.20" x2="989.3" y2="516.20" stroke="#888" stroke-width="0.8"/><ellipse cx="990.4" cy="517.50" rx="2.6" ry="1.4" fill="#666"/><ellipse cx="983" cy="538.40" rx="3.6" ry="2.3" transform="rotate(15 983 538.40)" fill="#d2d2d2"/><ellipse cx="999" cy="538.40" rx="3.6" ry="2.3" transform="rotate(-15 999 538.40)" fill="#d2d2d2"/><ellipse cx="991" cy="541.20" rx="2.8" ry="2" fill="#dadada"/><rect x="989.3" y="533.40" width="3" height="5" fill="#e4e4e4"/><ellipse cx="990.7" cy="532.20" rx="2.4" ry="1.5" fill="#3a3a3a"/><path d="M985.5,539.20 L990.8,540.40 L996.5,539.20" stroke="#5a5a5a" stroke-width="1.3" fill="none"/><ellipse cx="983" cy="569.60" rx="3.6" ry="2.3" transform="rotate(15 983 569.60)" fill="#d2d2d2"/><ellipse cx="999" cy="569.60" rx="3.6" ry="2.3" transform="rotate(-15 999 569.60)" fill="#d2d2d2"/><ellipse cx="991" cy="572.40" rx="2.8" ry="2" fill="#dadada"/><rect x="989.3" y="564.60" width="3" height="5" fill="#e4e4e4"/><ellipse cx="990.7" cy="563.40" rx="2.4" ry="1.5" fill="#3a3a3a"/><path d="M985.5,570.40 L990.8,571.60 L996.5,570.40" stroke="#5a5a5a" stroke-width="1.3" fill="none"/></svg>
</body></html>
